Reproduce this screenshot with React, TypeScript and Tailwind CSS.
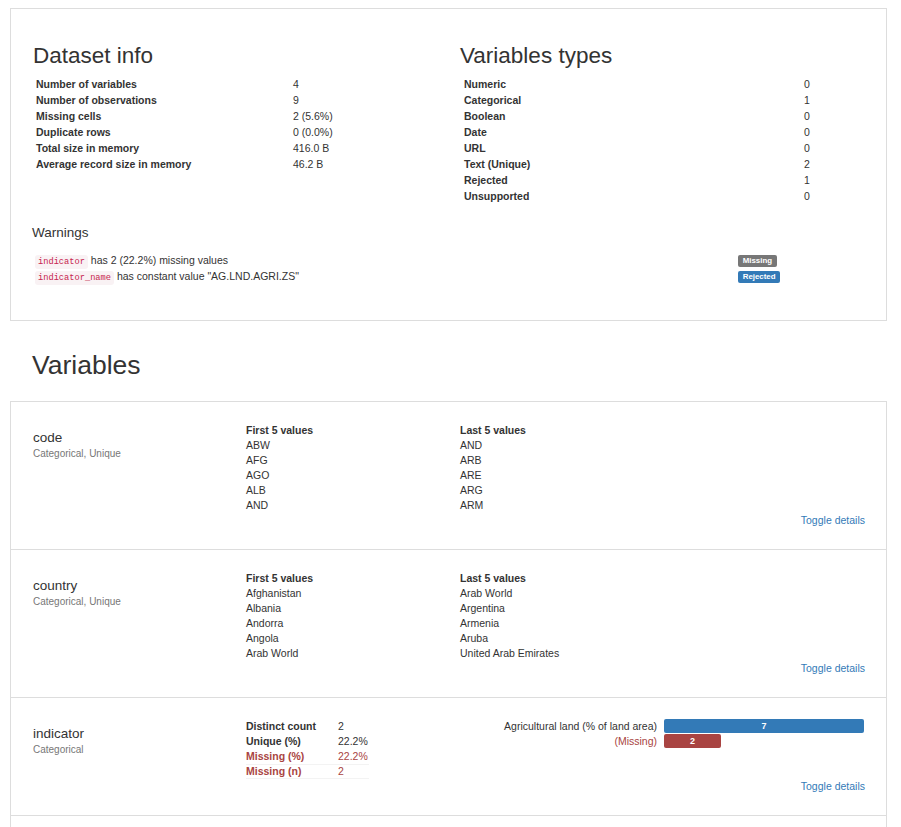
const datasetInfo: [string, string][] = [
	['Number of variables', '4'],
	['Number of observations', '9'],
	['Missing cells', '2 (5.6%)'],
	['Duplicate rows', '0 (0.0%)'],
	['Total size in memory', '416.0 B'],
	['Average record size in memory', '46.2 B'],
];

const variableTypes: [string, string][] = [
	['Numeric', '0'],
	['Categorical', '1'],
	['Boolean', '0'],
	['Date', '0'],
	['URL', '0'],
	['Text (Unique)', '2'],
	['Rejected', '1'],
	['Unsupported', '0'],
];

function InfoTable({ rows, labelWidth }: { rows: [string, string][]; labelWidth: string }) {
	return (
		<div className="flex flex-col">
			{rows.map(([label, value]) => (
				<div key={label} className="flex h-[16px] leading-[16px] text-[10.5px]">
					<div className={`${labelWidth} pl-[3px] font-bold`}>{label}</div>
					<div>{value}</div>
				</div>
			))}
		</div>
	);
}

function Badge({ children, blue }: { children: string; blue?: boolean }) {
	return (
		<span
			className={`inline-block h-[12px] rounded-[2px] px-[4.7px] text-[7.9px] font-bold leading-[12px] text-white ${
				blue ? 'bg-[#337ab7]' : 'bg-[#777]'
			}`}
		>
			{children}
		</span>
	);
}

function Code({ children }: { children: string }) {
	return (
		<code className="inline-block rounded-[3px] bg-[#f9f2f4] px-[3px] font-['Liberation_Mono',monospace] text-[8.7px] leading-[14px] text-[#c7254e]">
			{children}
		</code>
	);
}

function ValuesList({ title, values }: { title: string; values: string[] }) {
	return (
		<div className="flex flex-col">
			<div className="font-bold">{title}</div>
			{values.map((v) => (
				<div key={v}>{v}</div>
			))}
		</div>
	);
}

function VariableRow({
	name,
	kind,
	children,
}: {
	name: string;
	kind: string;
	children: React.ReactNode;
}) {
	return (
		<div className="pl-[22px] pr-[21px] pt-[21px] pb-[21px] text-[10.5px] leading-[15px]">
			<div className="grid grid-cols-[213px_214px_1fr]">
				<div className="pt-[5.5px]">
					<div className="text-[13.5px] leading-[18px]">{name}</div>
					<div className="text-[10px] leading-[14px] text-[#777]">{kind}</div>
				</div>
				{children}
			</div>
			<div className="text-right text-[#337ab7]">Toggle details</div>
		</div>
	);
}

export default function App() {
	return (
		<div className="min-h-screen bg-white pt-[8px] font-['Liberation_Sans',Arial,sans-serif] text-[#333]">
			<div className="ml-[10px] w-[877px] border border-[#ddd] px-[22px] pt-[33px] pb-[35px]">
				<div className="grid grid-cols-[427px_1fr]">
					<div>
						<h1 className="mb-[6px] text-[22.5px] leading-[28px]">Dataset info</h1>
						<InfoTable rows={datasetInfo} labelWidth="w-[260px]" />
					</div>
					<div>
						<h1 className="mb-[6px] text-[22.5px] leading-[28px]">Variables types</h1>
						<InfoTable rows={variableTypes} labelWidth="w-[344px] pl-[4px]" />
					</div>
				</div>
				<h3 className="mt-[19px] -ml-[1px] text-[13.5px] leading-[20px]">Warnings</h3>
				<div className="mt-[10px] flex flex-col text-[10.5px]">
					<div className="flex h-[16px] items-center">
						<div className="w-[705px] pl-[2px]">
							<Code>indicator</Code> has 2 (22.2%) missing values
						</div>
						<Badge>Missing</Badge>
					</div>
					<div className="flex h-[16px] items-center">
						<div className="w-[705px] pl-[2px]">
							<Code>indicator_name</Code> has constant value "AG.LND.AGRI.ZS"
						</div>
						<Badge blue>Rejected</Badge>
					</div>
				</div>
			</div>

			<h1 className="mt-[29px] ml-[32px] text-[26.5px] leading-[30px]">Variables</h1>

			<div className="mt-[21px] ml-[10px] w-[877px] divide-y divide-[#ddd] border border-[#ddd]">
				<VariableRow name="code" kind="Categorical, Unique">
					<ValuesList title="First 5 values" values={['ABW', 'AFG', 'AGO', 'ALB', 'AND']} />
					<ValuesList title="Last 5 values" values={['AND', 'ARB', 'ARE', 'ARG', 'ARM']} />
				</VariableRow>
				<VariableRow name="country" kind="Categorical, Unique">
					<ValuesList
						title="First 5 values"
						values={['Afghanistan', 'Albania', 'Andorra', 'Angola', 'Arab World']}
					/>
					<ValuesList
						title="Last 5 values"
						values={['Arab World', 'Argentina', 'Armenia', 'Aruba', 'United Arab Emirates']}
					/>
				</VariableRow>
				<VariableRow name="indicator" kind="Categorical">
					<div className="w-[123px]">
						<div className="flex">
							<div className="w-[92px] font-bold">Distinct count</div>
							<div>2</div>
						</div>
						<div className="flex">
							<div className="w-[92px] font-bold">Unique (%)</div>
							<div>22.2%</div>
						</div>
						<div className="flex text-[#a94442]">
							<div className="w-[92px] font-bold">Missing (%)</div>
							<div>22.2%</div>
						</div>
						<div className="flex border-y border-[#f3f3f3] leading-[13px] text-[#a94442]">
							<div className="w-[92px] font-bold">Missing (n)</div>
							<div>2</div>
						</div>
					</div>
					<div className="grid grid-cols-[197px_200px] content-start gap-x-[7px] self-start">
						<div className="text-right">Agricultural land (% of land area)</div>
						<div className="flex h-[15px] items-start">
							<div className="flex h-[14px] w-[200px] items-center justify-center rounded-[2px] bg-[#337ab7] text-[9px] font-bold text-white">
								7
							</div>
						</div>
						<div className="text-right text-[#a94442]">(Missing)</div>
						<div className="flex h-[15px] items-start">
							<div className="flex h-[14px] w-[57px] items-center justify-center rounded-[2px] bg-[#a94442] text-[9px] font-bold text-white">
								2
							</div>
						</div>
					</div>
				</VariableRow>
				{/* next variable starts below the fold */}
				<div className="h-[40px]" />
			</div>
		</div>
	);
}
